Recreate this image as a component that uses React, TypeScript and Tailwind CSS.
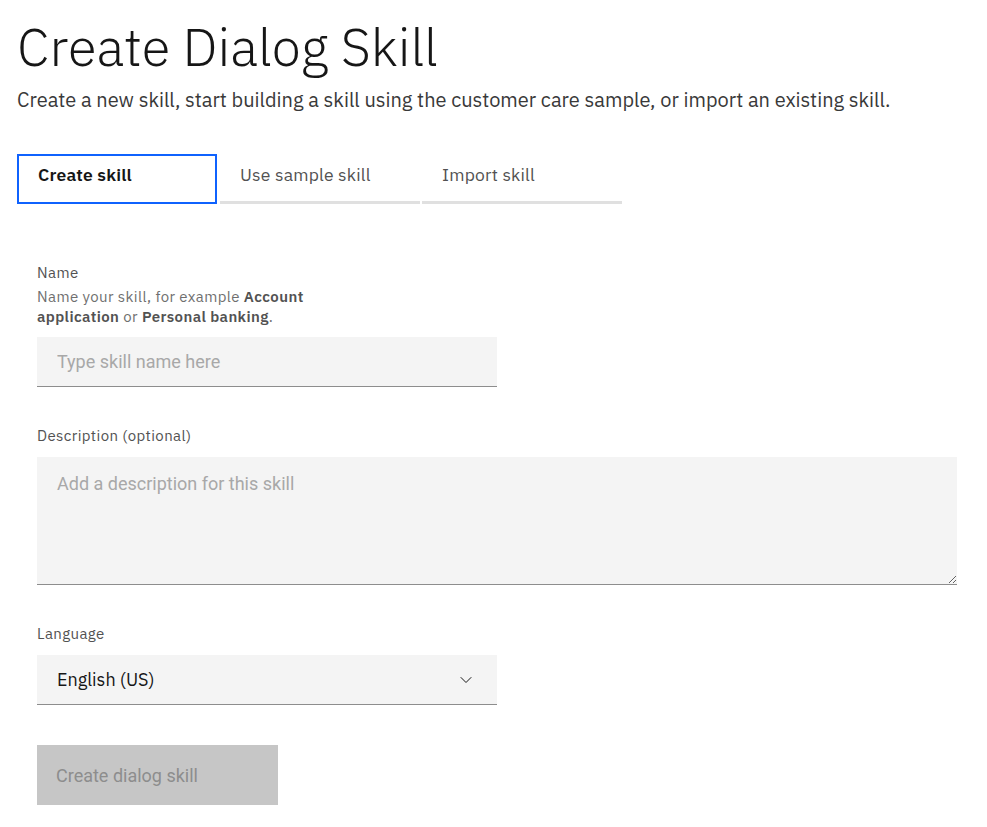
import { ChevronDown } from "lucide-react";

const plex = "font-['IBM_Plex_Sans','Noto_Sans',sans-serif]";
const roboto = "font-['Roboto',sans-serif]";

export default function App() {
  return (
    <div className={`${plex} min-h-[827px] bg-white pl-[17px] text-[#161616]`}>
      <h1 className="pt-[14px] text-[52.5px] font-light leading-[64px]">Create Dialog Skill</h1>
      <p className="mt-[7px] text-[20px] leading-[30px] text-[#393939]">
        Create a new skill, start building a skill using the customer care sample, or import an existing skill.
      </p>

      {/* Tabs */}
      <div className="mt-[39px] flex gap-[3px]">
        <button className="flex h-[50px] w-[200px] items-start border-2 border-[#0f62fe] px-[19px] pt-[8px] text-left text-[17.5px] font-semibold leading-[22px] tracking-[0.2px]">
          Create skill
        </button>
        <button className="flex h-[50px] w-[200px] items-start border-b-[3px] border-[#e0e0e0] px-[20px] pt-[10px] text-left text-[17.5px] leading-[22px] tracking-[0.2px] text-[#525252]">
          Use sample skill
        </button>
        <button className="-ml-[1px] flex h-[50px] w-[200px] items-start border-b-[3px] border-[#e0e0e0] px-[20px] pt-[10px] text-left text-[17.5px] leading-[22px] tracking-[0.2px] text-[#525252]">
          Import skill
        </button>
      </div>

      <form className="pl-[20px] pt-[59px]">
        <div>
          <label className="block text-[15px] leading-[20px] tracking-[0.4px] text-[#525252]">Name</label>
          <p className="mt-[4px] w-[300px] text-[15px] leading-[20px] tracking-[0.4px] text-[#6f6f6f]">
            Name your skill, for example <b className="font-semibold text-[#525252]">Account application</b> or{" "}
            <b className="font-semibold text-[#525252]">Personal banking</b>.
          </p>
          <input
            placeholder="Type skill name here"
            className={`${roboto} mt-[10px] block h-[50px] w-[460px] border-b border-[#8d8d8d] bg-[#f4f4f4] px-[20px] text-[18px] outline-none placeholder:text-[#a8a8a8]`}
          />
        </div>

        <div className="mt-[39px]">
          <label className="block text-[15px] leading-[20px] tracking-[0.4px] text-[#525252]">Description (optional)</label>
          <textarea
            placeholder="Add a description for this skill"
            className={`${roboto} mt-[11px] block h-[128px] w-[920px] border-b border-[#8d8d8d] bg-[#f4f4f4] px-[20px] pt-[14px] text-[18px] leading-[25px] outline-none placeholder:text-[#a8a8a8]`}
          />
        </div>

        <div className="mt-[39px]">
          <label className="block text-[15px] leading-[20px] tracking-[0.4px] text-[#525252]">Language</label>
          <div className="relative mt-[11px] flex h-[50px] w-[460px] items-center border-b border-[#8d8d8d] bg-[#f4f4f4] px-[20px]">
            <span className="text-[18px] text-[#161616]">English (US)</span>
            <ChevronDown className="absolute right-[21px] h-[20px] w-[20px] text-[#161616]" strokeWidth={1.2} />
          </div>
        </div>

        <button
          type="button"
          disabled
          className={`${roboto} mt-[40px] block h-[60px] w-[241px] bg-[#c6c6c6] px-[19px] text-left text-[18px] text-[#8d8d8d]`}
        >
          Create dialog skill
        </button>
      </form>
    </div>
  );
}
